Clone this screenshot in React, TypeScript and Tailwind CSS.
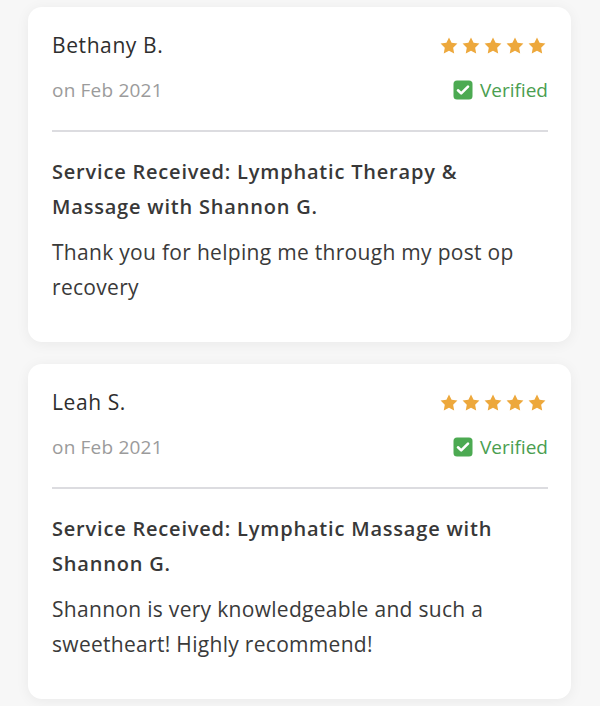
import React from "react";

const Star = () => (
  <svg width="18" height="17" viewBox="0 0 24 23" className="block">
    <path
      d="M12 0.6l3.5 7.2 7.9 1.1-5.8 5.5 1.4 7.9L12 18.5 4.9 22.3l1.4-7.9L0.6 8.9l7.9-1.1z"
      fill="#EDA83C"
    />
  </svg>
);

const Check = () => (
  <svg width="20" height="20" viewBox="0 0 20 20" className="block">
    <rect x="0.5" y="0.5" width="19" height="19" rx="3.5" fill="#4CAA52" />
    <path
      d="M5 10.3l3.2 3.1L15 6.6"
      stroke="#fff"
      strokeWidth="2.6"
      fill="none"
      strokeLinecap="round"
      strokeLinejoin="round"
    />
  </svg>
);

type Review = { name: string; service: string; body: string };

const reviews: Review[] = [
  {
    name: "Bethany B.",
    service: "Service Received: Lymphatic Therapy & Massage with Shannon G.",
    body: "Thank you for helping me through my post op recovery",
  },
  {
    name: "Leah S.",
    service: "Service Received: Lymphatic Massage with Shannon G.",
    body: "Shannon is very knowledgeable and such a sweetheart! Highly recommend!",
  },
];

const Card = ({ r }: { r: Review }) => (
  <div className="bg-white rounded-[14px] shadow-[0_2px_14px_rgba(0,0,0,0.06)] pl-6 pr-[23px] pt-6 pb-[37px]">
    <div className="flex items-center justify-between">
      <div className="text-[21px] leading-[28px] font-medium tracking-[0.6px] text-[#2e2e2e]">
        {r.name}
      </div>
      <div className="flex gap-[4px] pr-[2px]">
        <Star />
        <Star />
        <Star />
        <Star />
        <Star />
      </div>
    </div>
    <div className="flex items-center justify-between mt-[17px]">
      <div className="text-[19px] leading-[28px] tracking-[0.2px] text-[#9b9b9b]">on Feb 2021</div>
      <div className="flex items-center gap-[7px]">
        <Check />
        <span className="text-[19px] leading-[28px] text-[#4A9E50]">Verified</span>
      </div>
    </div>
    <div className="h-[2px] bg-[#dcdce0] mt-[26px]" />
    <div className="mt-[22px] text-[20px] leading-[35px] font-semibold tracking-[0.8px] text-[#383838] pr-6">
      {r.service}
    </div>
    <div className="mt-[11px] text-[21px] leading-[35px] tracking-[0.3px] text-[#3a3a3a] pr-6">
      {r.body}
    </div>
  </div>
);

export default function App() {
  return (
    <div
      className="min-h-[706px] w-[600px] bg-[#f7f7f7] pt-[7px] pl-[28px] pr-[29px] flex flex-col gap-[22px]"
      style={{ fontFamily: "'Open Sans', sans-serif" }}
    >
      {reviews.map((r) => (
        <Card key={r.name} r={r} />
      ))}
    </div>
  );
}
